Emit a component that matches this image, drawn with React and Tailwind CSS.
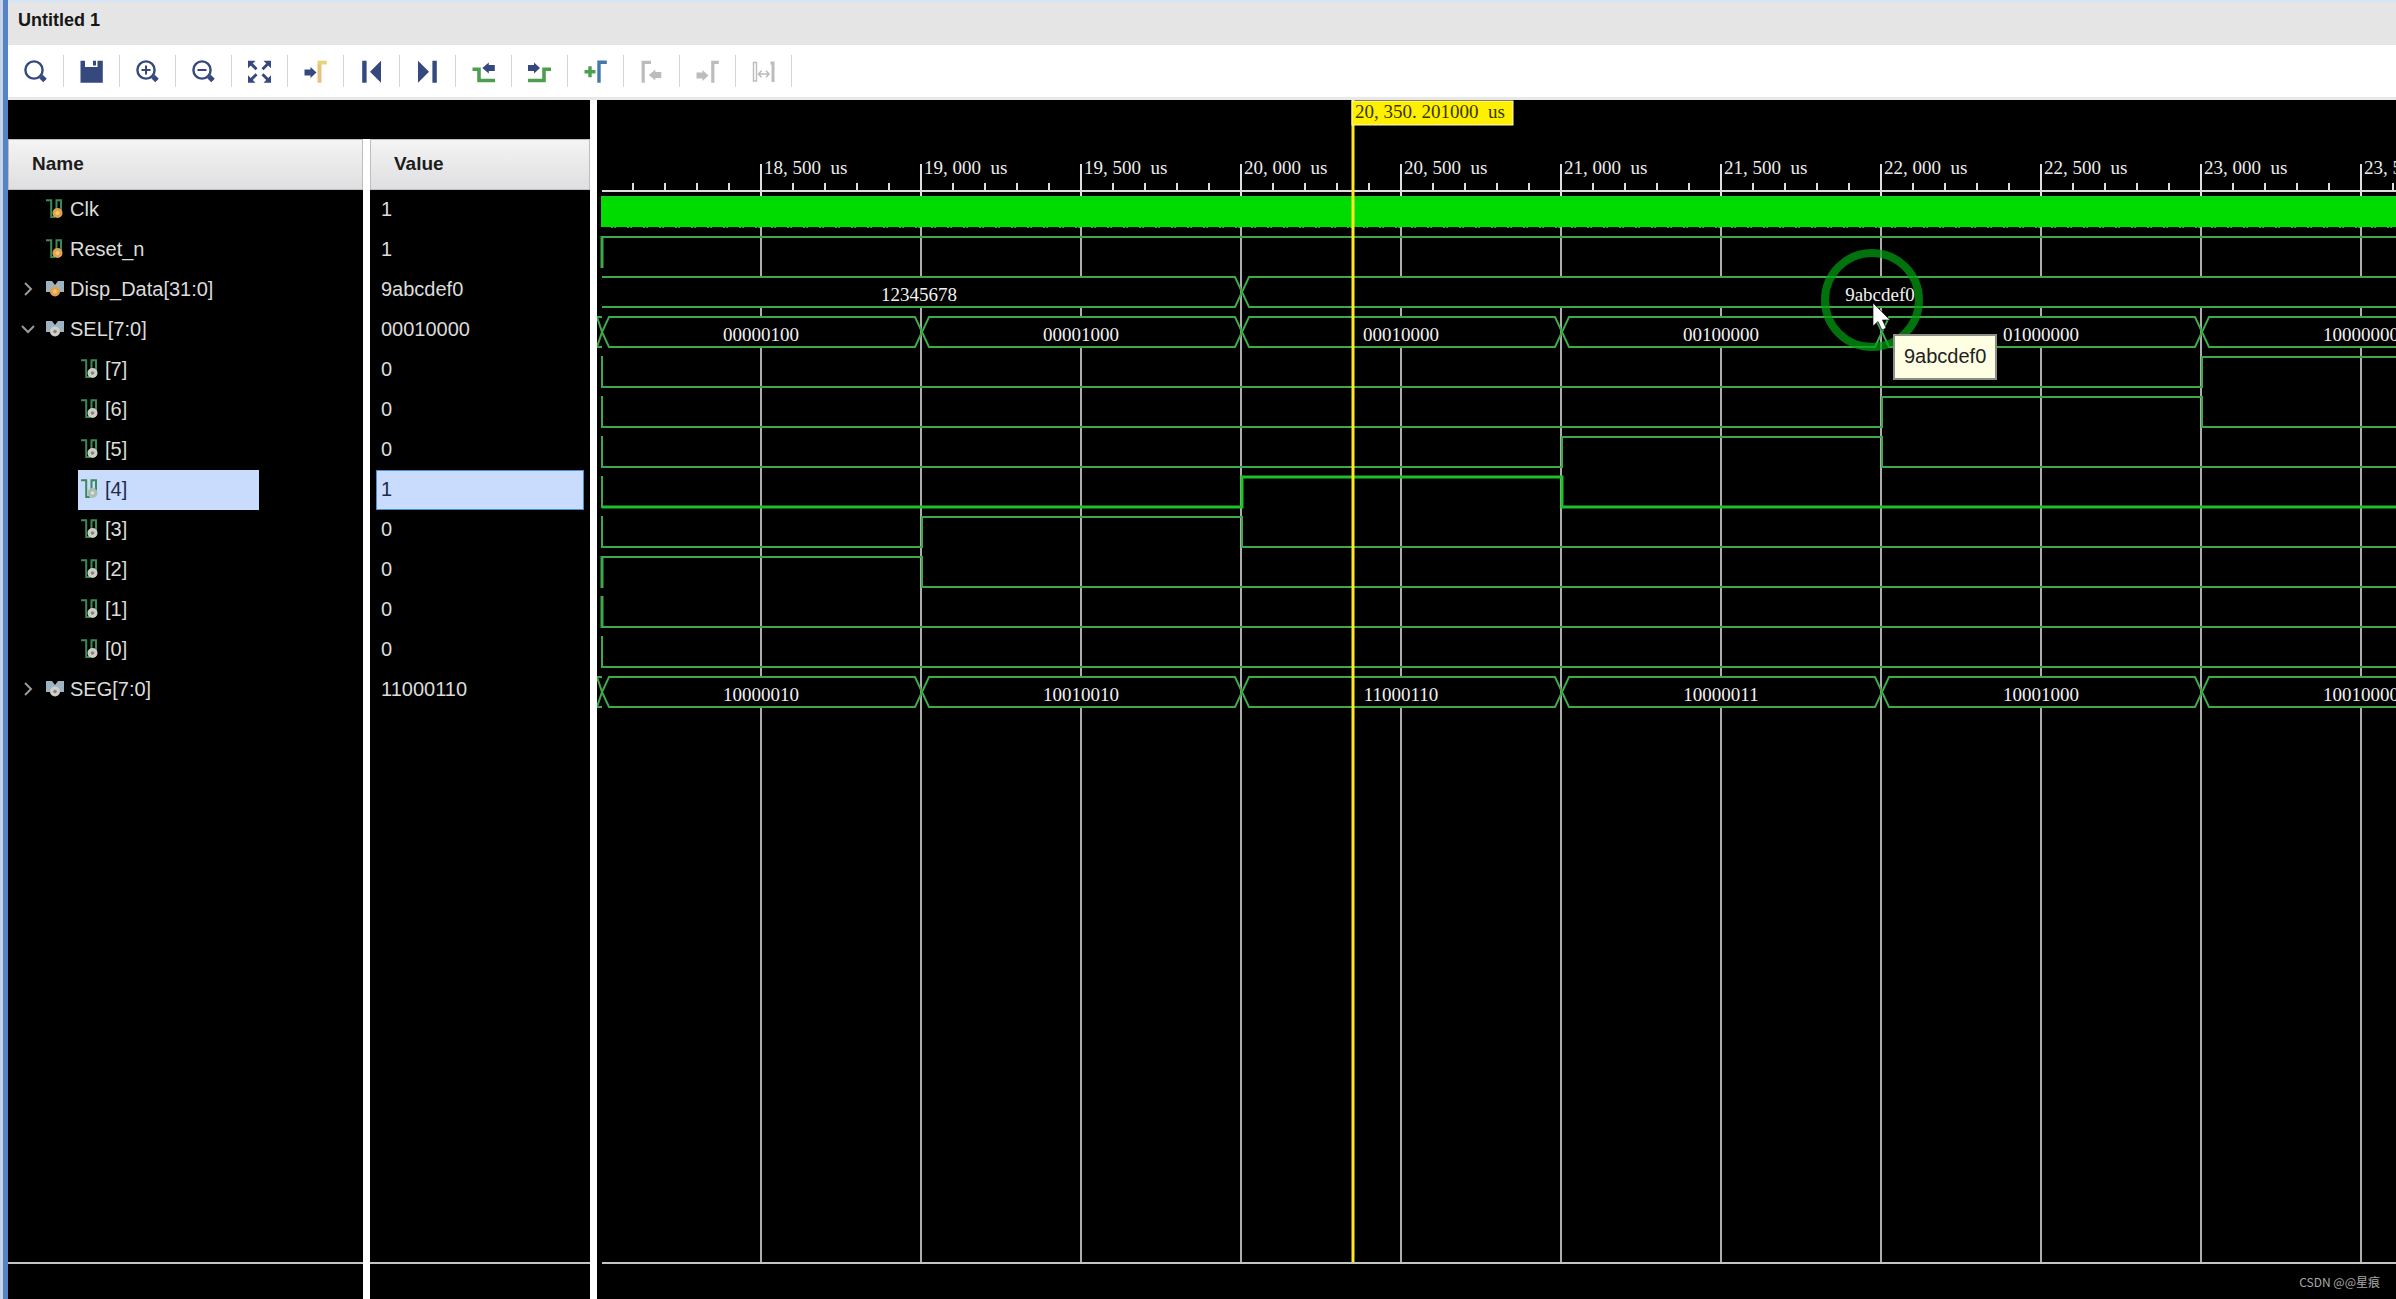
import React from "react";

const SANS = "font-['Liberation_Sans',Arial,sans-serif]";
const NAVY = "#35497f";
const LEAF = "#4f9e50";
const MUTED = "#bcbcbc";

/* ---------- toolbar icons (24 x 24) ---------- */

function Lens({ children }) {
  return (
    <>
      <circle cx="10" cy="11" r="8.6" fill="none" stroke={NAVY} strokeWidth="2.4" />
      <path d="M17 17.5 L21 21.5" stroke={NAVY} strokeWidth="5" />
      {children}
    </>
  );
}

const ARROW_RIGHT = "M0 2.5 H6 V0 L12 5.5 L6 11 V8.500 H0 Z";
const ARROW_LEFT = "M12.5 2.5 H6.5 V0 L0 5.5 L6.5 11 V8.500 H12.5 Z";

const TOOLS = [
  { label: "Search", art: <Lens /> },
  {
    label: "Save",
    art: (
      <path
        d="M0.5 1.7 H5 V8 H17.5 V1.7 H22.8 V23.7 H0.5 Z M13 1.7 H16 V6.5 H13 Z"
        fill={NAVY}
      />
    ),
  },
  {
    label: "Zoom in",
    art: (
      <Lens>
        <path d="M5.5 11 H14.5 M10 6.5 V15.5" stroke={NAVY} strokeWidth="2" />
      </Lens>
    ),
  },
  {
    label: "Zoom out",
    art: (
      <Lens>
        <path d="M5.5 11 H14.5" stroke={NAVY} strokeWidth="2" />
      </Lens>
    ),
  },
  {
    label: "Zoom fit",
    art: (
      <g>
        <path
          d="M0 1.7 H7.5 L0 9.2 Z M23 1.7 V9.2 L15.5 1.7 Z M0 23.7 V16.2 L7.5 23.7 Z M23 23.7 H15.5 L23 16.2 Z"
          fill={NAVY}
        />
        <path
          d="M2.5 4.2 L8.5 10.2 M20.5 4.2 L14.5 10.2 M2.5 21.2 L8.5 15.2 M20.5 21.2 L14.5 15.2"
          stroke={NAVY}
          strokeWidth="3"
        />
      </g>
    ),
  },
  {
    label: "Go to cursor",
    art: (
      <g>
        <path d={ARROW_RIGHT} transform="translate(0.5 8)" fill={NAVY} />
        <path d="M13.5 5 H17.5 V23.7 H13.5 Z" fill="#e8c080" />
        <path d="M13.5 1.7 H22.8 V5.5 H13.5 Z" fill="#e4d57a" />
      </g>
    ),
  },
  {
    label: "Go to start",
    art: <path d="M2.2 1.7 H6.6 V23.7 H2.2 Z M21 1.7 V23.7 L10 12.7 Z" fill={NAVY} />,
  },
  {
    label: "Go to end",
    art: <path d="M16.4 1.7 H20.8 V23.7 H16.4 Z M2 1.7 V23.7 L13 12.7 Z" fill={NAVY} />,
  },
  {
    label: "Previous transition",
    art: (
      <g>
        <path d="M0.5 10.3 H7 V21.5 H23" fill="none" stroke={LEAF} strokeWidth="3.6" />
        <path d={ARROW_LEFT} transform="translate(10.3 3.5)" fill={NAVY} />
      </g>
    ),
  },
  {
    label: "Next transition",
    art: (
      <g>
        <path d="M0 21.5 H16 V10.3 H23" fill="none" stroke={LEAF} strokeWidth="3.6" />
        <path d={ARROW_RIGHT} transform="translate(0 3.5)" fill={NAVY} />
      </g>
    ),
  },
  {
    label: "Add marker",
    art: (
      <g>
        <path d="M0.5 12.7 H11.5 M6 7.2 V18.2" stroke={LEAF} strokeWidth="3.4" />
        <path d="M15 23.7 V3.3 H22.8" fill="none" stroke="#4279ab" strokeWidth="3.4" />
      </g>
    ),
  },
  {
    label: "Previous marker",
    disabled: true,
    art: (
      <g>
        <path d="M3.2 23.7 V3.3 H11" fill="none" stroke={MUTED} strokeWidth="3.2" />
        <path d={ARROW_LEFT} transform="translate(8.8 10.5)" fill={MUTED} />
      </g>
    ),
  },
  {
    label: "Next marker",
    disabled: true,
    art: (
      <g>
        <path d="M16.8 23.7 V3.3 H22.8" fill="none" stroke={MUTED} strokeWidth="3.2" />
        <path d={ARROW_RIGHT} transform="translate(0.5 11)" fill={MUTED} />
      </g>
    ),
  },
  {
    label: "Swap cursors",
    disabled: true,
    art: (
      <g stroke={MUTED} fill="none">
        <path d="M1.5 3.5 H4.5 V22 H1.5 Z" strokeWidth="1.4" />
        <path d="M18.5 4 H21 V23" strokeWidth="3" />
        <path d="M6.5 15 H17 M9.5 11.8 L6.5 15 L9.5 18.2 M14 11.8 L17 15 L14 18.2" strokeWidth="1.6" />
      </g>
    ),
  },
];

function Toolbar() {
  return (
    <div role="toolbar" aria-label="Waveform" className="flex items-center h-[55px] border-b-3 border-[#e8e8e8] bg-white">
      {TOOLS.map((t) => (
        <button
          key={t.label}
          type="button"
          aria-label={t.label}
          disabled={t.disabled}
          className="flex h-8 w-14 items-center justify-center border-r border-[#d4d4d4]"
        >
          <svg viewBox="0 0 24 24" className="size-6">{t.art}</svg>
        </button>
      ))}
    </div>
  );
}

/* ---------- signal tree ---------- */

const SIGNALS = [
  { name: "Clk", value: "1", kind: "wire", input: true },
  { name: "Reset_n", value: "1", kind: "wire", input: true },
  { name: "Disp_Data[31:0]", value: "9abcdef0", kind: "bus", input: true, tree: "closed" },
  { name: "SEL[7:0]", value: "00010000", kind: "bus", tree: "open" },
  { name: "[7]", value: "0", kind: "wire", child: true },
  { name: "[6]", value: "0", kind: "wire", child: true },
  { name: "[5]", value: "0", kind: "wire", child: true },
  { name: "[4]", value: "1", kind: "wire", child: true, selected: true },
  { name: "[3]", value: "0", kind: "wire", child: true },
  { name: "[2]", value: "0", kind: "wire", child: true },
  { name: "[1]", value: "0", kind: "wire", child: true },
  { name: "[0]", value: "0", kind: "wire", child: true },
  { name: "SEG[7:0]", value: "11000110", kind: "bus", tree: "closed" },
];

function Ball({ cx, cy, input, dim }) {
  return input ? (
    <g>
      <circle cx={cx} cy={cy} r="5" fill="#e0a24a" />
      <circle cx={cx} cy={cy} r="2" fill="#f3c67e" />
    </g>
  ) : (
    <g>
      <circle cx={cx} cy={cy} r="5" fill={dim ? "#aebdb4" : "#cfcfc8"} />
      <circle cx={cx} cy={cy} r="1.8" fill={dim ? "#dde3dc" : "#85857f"} />
    </g>
  );
}

function SignalIcon({ kind, input, dim }) {
  return (
    <svg viewBox="0 0 18 20" className="h-5 w-[18px] shrink-0">
      {kind === "wire" ? (
        <g>
          <path d="M0 1.2 H5.2 V18 H9" fill="none" stroke="#3c8a58" strokeWidth="2" />
          <path d="M10.5 16 V1.2 H15 V14" fill="none" stroke="#3c8a58" strokeWidth="2" />
          <Ball cx="11.5" cy="14" input={input} dim={dim} />
        </g>
      ) : (
        <g>
          <path d="M0 2 H6 L9 6 L12 2 H18 V13 H13 L9 15 L5 13 H0 Z" fill="#9db3c2" />
          <Ball cx="9" cy="12.5" input={input} />
        </g>
      )}
    </svg>
  );
}

function Chevron({ state, name }) {
  return (
    <button type="button" aria-label={"Toggle " + name} aria-expanded={state === "open"} className="flex w-6 shrink-0 justify-center">
      <svg viewBox="0 0 16 16" className="size-4">
        <path
          d={state === "open" ? "M2 5 L8 11 L14 5" : "M5 2 L11 8 L5 14"}
          fill="none"
          stroke="#9a9a9a"
          strokeWidth="2"
        />
      </svg>
    </button>
  );
}

const HEADER =
  "h-[51px] flex items-center border border-[#bdbdbd] bg-linear-to-b from-[#f4f4f4] to-[#dfdfe1] pb-0.5 pl-[23px] text-[19px] font-bold text-[#1c1c1c]";

function NameColumn() {
  return (
    <section className="flex w-[355px] shrink-0 flex-col">
      <div className="h-[39px]" />
      <h2 className={HEADER}>Name</h2>
      <ul className="flex-1">
        {SIGNALS.map((s) => (
          <li key={s.name} className="h-10">
            {s.child ? (
              <div
                className={
                  "ml-[70px] flex h-10 w-[181px] items-center gap-1.5 pb-[3px] pl-[3px] " +
                  (s.selected ? "bg-[#c9dcfe] text-[#1d2b4a]" : "")
                }
              >
                <SignalIcon kind={s.kind} input={s.input} dim={s.selected} />
                <span>{s.name}</span>
              </div>
            ) : (
              <div className="flex h-10 items-center gap-1.5 pb-[3px] pl-2">
                {s.tree ? <Chevron state={s.tree} name={s.name} /> : <span className="w-6 shrink-0" />}
                <SignalIcon kind={s.kind} input={s.input} />
                <span>{s.name}</span>
              </div>
            )}
          </li>
        ))}
      </ul>
      <div className="h-[37px] border-t-2 border-[#c4c4c4]" />
    </section>
  );
}

function ValueColumn() {
  return (
    <section className="flex w-[220px] shrink-0 flex-col">
      <div className="h-[39px]" />
      <h2 className={HEADER}>Value</h2>
      <ul className="flex-1">
        {SIGNALS.map((s) => (
          <li
            key={s.name}
            className={
              "mx-1.5 flex h-10 items-center border px-1 pb-[3px] " +
              (s.selected ? "border-[#4d8fcb] bg-[#c9dcfe] text-[#1d2b4a]" : "border-transparent")
            }
          >
            {s.value}
          </li>
        ))}
      </ul>
      <div className="h-[37px] border-t-2 border-[#c4c4c4]" />
    </section>
  );
}

/* ---------- waveform ---------- */

const X0 = 5; // left edge of the plotted range
const STEP = 160; // 500 us
const FAR = 6000; // drawn past the visible edge
const WAVE = "#3fa848";
const edge = (n) => X0 + n * 320;
const high = (row) => 97 + row * 40;
const low = (row) => 127 + row * 40;

const DIGITS = "'Liberation Serif', 'Times New Roman', serif";

const GRID = Array.from({ length: 12 }, (_, i) => ({
  x: 164 + i * STEP,
  label: (18 + Math.floor((i + 1) / 2)) + ", " + (i % 2 === 0 ? "500" : "000") + "\u2002us",
}));

const BITS = [
  { row: 1, levels: [[0, 1]], strong: true },
  { row: 4, levels: [[0, 0], [5, 1]] },
  { row: 5, levels: [[0, 0], [4, 1], [5, 0]] },
  { row: 6, levels: [[0, 0], [3, 1], [4, 0]] },
  { row: 7, levels: [[0, 0], [2, 1], [3, 0]], selected: true },
  { row: 8, levels: [[0, 0], [1, 1], [2, 0]] },
  { row: 9, levels: [[0, 1], [1, 0]], strong: true },
  { row: 10, levels: [[0, 0]], strong: true },
  { row: 11, levels: [[0, 0]] },
];

function Bit({ row, levels, strong, selected }) {
  const y = (v) => (v ? high(row) : low(row));
  let d = "M" + X0 + " " + y(levels[0][1]);
  levels.slice(1).forEach(([n, v]) => {
    d += " H" + edge(n) + " V" + y(v);
  });
  d += " H" + FAR;
  return (
    <g fill="none">
      <path d={"M" + X0 + " " + (high(row) - 1) + " V" + (low(row) + 1)} stroke={WAVE} strokeWidth={strong ? 3 : 2} />
      <path d={d} stroke={selected ? "#1fc226" : WAVE} strokeWidth={selected ? 3 : 2} />
    </g>
  );
}

const BUSES = [
  { row: 2, flat: true, spans: [[0, 2, "12345678", 322], [2, 12, "9abcdef0", 1283]] },
  {
    row: 3,
    spans: ["00000100", "00001000", "00010000", "00100000", "01000000", "10000000"].map((t, i) => [i, i + 1, t]),
  },
  {
    row: 12,
    spans: ["10000010", "10010010", "11000110", "10000011", "10001000", "10010000"].map((t, i) => [i, i + 1, t]),
  },
];

function Bus({ row, spans, flat }) {
  const t = high(row);
  const b = low(row);
  const m = (t + b) / 2;
  return (
    <g>
      {spans.map(([from, to, text, at]) => {
        const l = edge(from);
        const r = edge(to);
        const open = flat && from === 0;
        const left = open
          ? "M" + r + " " + m + " L" + (r - 7) + " " + b + " H" + l + " M" + l + " " + t
          : "M" + r + " " + m + " L" + (r - 7) + " " + b + " H" + (l + 7) + " L" + l + " " + m + " L" + (l + 7) + " " + t;
        return (
          <g key={from}>
            <rect x={l + (open ? 0 : 7)} y={t} width={r - l - (open ? 7 : 14)} height={b - t} fill="#000" />
            <path d={left + " H" + (r - 7) + " L" + r + " " + m} fill="none" stroke={WAVE} strokeWidth="2" />
            <text x={at || (l + r) / 2 - 1} y={t + 24} textAnchor="middle" fontSize="19" fill="#f2f2f2">
              {text}
            </text>
          </g>
        );
      })}
      {!flat && (
        <path
          d={"M0 " + t + " H5 M0 " + b + " H5 M0 " + t + " L5 " + m + " L0 " + b}
          fill="none"
          stroke={WAVE}
          strokeWidth="2"
        />
      )}
    </g>
  );
}

const TICKS = Array.from({ length: 60 }, (_, i) => 36 + i * 32);

function WavePanel() {
  return (
    <section className="flex min-w-0 flex-1 flex-col">
      <div className="relative flex-1">
        <svg className="absolute inset-0 size-full" fontFamily={DIGITS} role="img" aria-label="Waveform">
          <g stroke="#adadad" strokeWidth="2">
            {GRID.map((g) => (
              <line key={g.x} x1={g.x} x2={g.x} y1="127" y2="100%" />
            ))}
          </g>
          <g stroke="#dedede" strokeWidth="2">
            <path d={"M" + X0 + " 91 H" + FAR} />
            {TICKS.map((x) => (
              <path key={x} d={"M" + x + " 83 V91"} />
            ))}
            {GRID.map((g) => (
              <path key={g.x} d={"M" + g.x + " 64 V96"} />
            ))}
          </g>
          {GRID.map((g) => (
            <text key={g.x} x={g.x + 3} y="74" fontSize="19" fill="#ececec">
              {g.label}
            </text>
          ))}
          <rect x={X0 - 1} y="96" width={FAR} height="31" fill="#00dc00" />
          <path d={"M" + X0 + " 96.5 H" + FAR} stroke="#35bb3c" strokeWidth="1" />
          <path d={"M14 127.5 H" + FAR} stroke="#2c9a35" strokeWidth="1" strokeDasharray="2 1 2 11" />
          {BITS.map((b) => (
            <Bit key={b.row} {...b} />
          ))}
          {BUSES.map((b) => (
            <Bus key={b.row} {...b} />
          ))}
          <line x1="756" x2="756" y1="0" y2="100%" stroke="#ffe81f" strokeWidth="3" />
          <rect x="755" y="1" width="161" height="24" fill="#fff000" stroke="#fffbc0" strokeWidth="1" />
          <text x="758" y="18" fontSize="19" fill="#3a3600">
            {"20, 350. 201000\u2002us"}
          </text>
          <circle cx="1275" cy="200" r="47" fill="none" stroke="#00a010" strokeOpacity="0.72" strokeWidth="8" />
          <path
            d="M1276 203 V226 L1281 221.5 L1285 230 L1289 228 L1285.500 220 H1293 Z"
            fill="#fff"
            stroke="#000"
            strokeWidth="0.6"
          />
        </svg>
        <div
          role="tooltip"
          className="absolute left-[1296px] top-[234px] flex h-[46px] items-center border-2 border-[#8d8d86] bg-[#fefee3] px-[9px] pb-0.5 text-[#222]"
        >
          9abcdef0
        </div>
      </div>
      <footer className="ml-[5px] flex h-[37px] items-center justify-end border-t-2 border-[#c4c4c4] pr-4 font-['Noto_Sans_CJK_SC',sans-serif] text-xs text-[#a8a8a8]">
        CSDN @@星痕
      </footer>
    </section>
  );
}

export default function App() {
  return (
    <div className={"flex min-h-screen overflow-hidden bg-black text-[20px] leading-6 text-[#dcdcdc] " + SANS}>
      <div className="w-[3px] shrink-0 bg-[#c6d3e8]" />
      <div className="w-[5px] shrink-0 bg-[#5683c2]" />
      <div className="flex min-w-0 flex-1 flex-col">
        <header className="flex h-[45px] items-center border-t-2 border-[#d6e4f7] bg-[#e5e5e5] pb-[7px] pl-2.5">
          <h1 className="text-lg font-bold text-[#161616]">Untitled 1</h1>
        </header>
        <Toolbar />
        <main className="flex flex-1">
          <NameColumn />
          <div className="mt-[39px] w-[7px] shrink-0 bg-white" />
          <ValueColumn />
          <div className="w-[7px] shrink-0 bg-white" />
          <WavePanel />
        </main>
      </div>
    </div>
  );
}
